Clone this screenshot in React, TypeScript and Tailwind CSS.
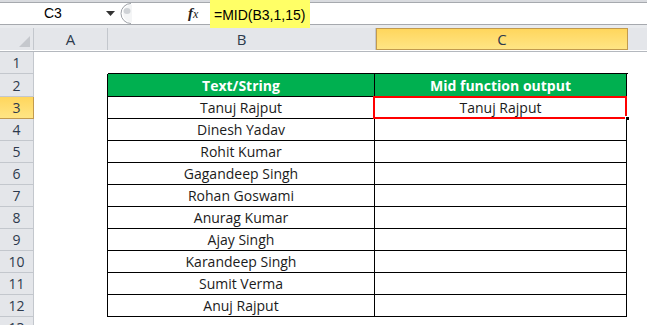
import React from "react";

const names = [
  "Tanuj Rajput",
  "Dinesh Yadav",
  "Rohit Kumar",
  "Gagandeep Singh",
  "Rohan Goswami",
  "Anurag Kumar",
  "Ajay Singh",
  "Karandeep Singh",
  "Sumit Verma",
  "Anuj Rajput",
];

const cellFont = { fontFamily: '"Open Sans", "Noto Sans", sans-serif' };

function RowHeader({ n, active, h }: { n: number; active?: boolean; h: string }) {
  return (
    <div
      className={`${h} w-[34px] shrink-0 box-border border-r border-b flex items-center justify-center text-[14px] text-[#2d3a4d] ${
        active
          ? "bg-gradient-to-b from-[#ffd65c] to-[#ffe584] border-[#c29a4e]"
          : "bg-[#e4e6ea] border-[#c3c7cd]"
      }`}
      style={cellFont}
    >
      {n}
    </div>
  );
}

export default function App() {
  return (
    <div className="w-[647px] h-[325px] overflow-hidden bg-white relative" style={{ fontFamily: '"Liberation Sans", Arial, sans-serif' }}>
      {/* formula bar */}
      <div className="h-[29px] bg-[#e9ebee] flex flex-col">
        <div className="h-[3px] bg-[#d9dbdf] border-b border-[#a6a9ae]" />
        <div className="h-[21px] bg-white flex items-center relative">
          <div className="w-[118px] h-full flex items-center relative">
            <span className="absolute left-[44px] text-[14px] text-black">C3</span>
            <svg className="absolute left-[106px] top-[8px]" width="9" height="5" viewBox="0 0 9 5">
              <path d="M0 0 H9 L4.5 5 Z" fill="#333" />
            </svg>
          </div>
          <svg width="16" height="21" viewBox="0 0 16 21" className="shrink-0">
            <path d="M13 0.5 A10 10 0 0 0 13 20.5" fill="none" stroke="#9ca0a6" strokeWidth="1" />
            <path d="M14 1.5 A9 9 0 0 0 14 19.5" fill="#f4f5f6" stroke="none" />
            <ellipse cx="9" cy="8" rx="3.5" ry="3" fill="#cfd2d6" />
          </svg>
          <div className="w-[54px]" />
          <span className="text-[15px] italic text-[#222]" style={{ fontFamily: '"Liberation Serif", serif' }}>
            <span className="font-bold">f</span><span className="text-[12px]">x</span>
          </span>
          <div className="w-[10px]" />
          <div className="absolute left-[210px] top-[-3px] w-[100px] h-[28px] bg-[#ffff66]" />
          <span className="absolute left-[214px] top-[2px] text-[14px] text-black">=MID(B3,1,15)</span>
        </div>
        <div className="h-[5px] border-t border-b border-[#a6a9ae] bg-[#e9ebee]" />
      </div>

      {/* column headers */}
      <div className="h-[23px] flex border-b border-[#b4b8be] box-content -mt-[1px]">
        <div className="w-[34px] h-[22px] box-border border-r border-[#c3c7cd] bg-[#e4e6ea] relative">
          <svg className="absolute right-[3px] bottom-[3px]" width="11" height="11" viewBox="0 0 11 11">
            <path d="M11 0 V11 H0 Z" fill="#c5c8cd" />
          </svg>
        </div>
        <div className="w-[74px] h-[22px] box-border border-r border-[#c3c7cd] bg-[#e4e6ea] flex items-center justify-center text-[15px] text-[#2d3a4d]" style={cellFont}>A</div>
        <div className="w-[268px] h-[22px] box-border border-r border-[#c3c7cd] bg-[#e4e6ea] flex items-center justify-center text-[15px] text-[#2d3a4d]" style={cellFont}>B</div>
        <div className="w-[252px] h-[22px] box-border border border-[#c29a4e] bg-gradient-to-b from-[#ffd65c] to-[#ffe584] flex items-center justify-center text-[15px] text-[#2d3a4d]" style={cellFont}>C</div>
        <div className="flex-1 h-[22px] bg-[#e4e6ea]" />
      </div>

      {/* row 1 */}
      <div className="flex">
        <RowHeader n={1} h="h-[22px]" />
        <div className="w-[74px]" />
        <div className="w-[520px] h-[22px] border-b border-black box-border" />
      </div>

      {/* row 2 header */}
      <div className="flex">
        <RowHeader n={2} h="h-[23px]" />
        <div className="w-[73px]" />
        <div className="w-[268px] h-[23px] box-border border-l border-r border-b border-black bg-[#00b050] flex items-center justify-center text-white font-bold text-[14px]" style={cellFont}>
          Text/String
        </div>
        <div className="w-[252px] h-[23px] box-border border-r border-b border-black bg-[#00b050] flex items-center justify-center text-white font-bold text-[14px]" style={cellFont}>
          Mid function output
        </div>
      </div>

      {names.map((name, i) => (
        <div className="flex" key={name}>
          <RowHeader n={i + 3} active={i === 0} h="h-[22px]" />
          <div className="w-[73px]" />
          <div className="w-[268px] h-[22px] box-border border-l border-r border-b border-black flex items-center justify-center text-[14px] text-[#1b1b1b]" style={cellFont}>
            {name}
          </div>
          <div className="w-[252px] h-[22px] box-border border-r border-b border-black flex items-center justify-center text-[14px] text-[#1b1b1b] relative" style={cellFont}>
            {i === 0 && (
              <>
                <div className="absolute left-[-2px] top-[-1px] w-[254px] h-[23px] border-2 border-[#ff0000]" />
                <div className="absolute right-[-4px] bottom-[-3px] w-[5px] h-[5px] bg-black border border-white" />
              </>
            )}
            <span className="relative">{i === 0 ? "Tanuj Rajput" : ""}</span>
          </div>
        </div>
      ))}

      <div className="flex">
        <RowHeader n={13} h="h-[22px]" />
      </div>
    </div>
  );
}
